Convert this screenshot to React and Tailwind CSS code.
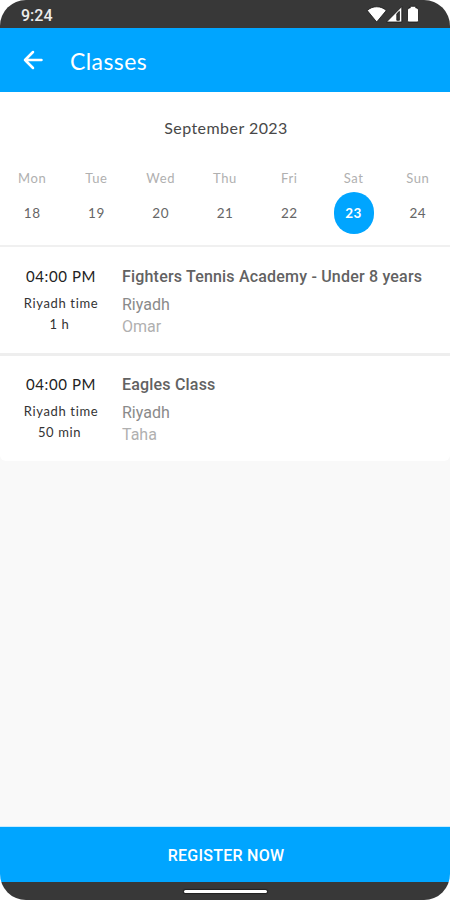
const days = [
  { name: 'Mon', date: 18 },
  { name: 'Tue', date: 19 },
  { name: 'Wed', date: 20 },
  { name: 'Thu', date: 21 },
  { name: 'Fri', date: 22 },
  { name: 'Sat', date: 23, selected: true },
  { name: 'Sun', date: 24 },
];

const classes = [
  { time: '04:00 PM', duration: '1 h', title: 'Fighters Tennis Academy - Under 8 years', city: 'Riyadh', coach: 'Omar' },
  { time: '04:00 PM', duration: '50 min', title: 'Eagles Class', city: 'Riyadh', coach: 'Taha' },
];

function StatusBar() {
  return (
    <div className="h-7 shrink-0 bg-[#383838] pl-[21px] pr-[31px] flex items-start justify-between">
      <span className="font-['Roboto',sans-serif] text-base leading-[31px] font-medium text-[#ececec]">9:24</span>
      <svg width="54" height="18" viewBox="0 0 54 18" className="mt-[5px]" fill="#fff" stroke="#151515" strokeWidth="0.8">
        <path d="M2.300 5.600C7 .5 16.500 .5 21.200 5.600L11.700 17Z" />
        <path fillRule="evenodd" d="M21.500 17L36.800 1.500V17ZM31.800 8.800V15.300H34.400V6.300Z" />
        <path d="M45.200 3V1.300H50.800V3H51.500Q53.500 3 53.500 5V15.700Q53.500 17 52.200 17H43.800Q42.500 17 42.500 15.700V5Q42.500 3 44.500 3Z" />
      </svg>
    </div>
  );
}

function Header() {
  return (
    <header className="h-[64px] shrink-0 bg-[#00a5ff] flex items-center pl-[23px] text-white">
      <svg width="20" height="20" viewBox="0 0 20 20" fill="none" stroke="currentColor" strokeWidth="2.500" strokeLinecap="round" strokeLinejoin="round">
        <path d="M18.500 10H2M10 2L2 10L10 18" />
      </svg>
      <h1 className="ml-[27px] text-[23px] leading-8 tracking-[0.4px] pt-[2px]">Classes</h1>
    </header>
  );
}

function Day({ day }) {
  return (
    <div className="flex flex-col items-center">
      <span className="text-[13px] leading-5 tracking-[0.6px] text-[#b0b0b0]">{day.name}</span>
      {day.selected ? (
        <span className="mt-1 h-[42px] w-10 pt-px rounded-full bg-[#00a5ff] flex items-center justify-center text-[13.5px] tracking-[0.5px] font-bold text-white">{day.date}</span>
      ) : (
        <span className="mt-1 h-[42px] w-10 pt-px flex items-center justify-center text-[13.5px] tracking-[0.5px] text-[#666]">{day.date}</span>
      )}
    </div>
  );
}

function ClassRow({ item }) {
  return (
    <div className="bg-white flex pb-[15px] pt-[17px] first:pt-[18px]">
      <div className="w-[122px] flex flex-col items-center text-[#333]">
        <span className="text-[15px] leading-[22px] tracking-[0.6px] text-[#222]">{item.time}</span>
        <span className="mt-[6px] text-[13px] leading-[21px] tracking-[0.65px]">Riyadh time</span>
        <span className="text-[13px] leading-[21px] tracking-[0.6px] pr-[3px]">{item.duration}</span>
      </div>
      <div className="mt-px flex flex-col font-['Roboto',sans-serif] text-base">
        <span className="leading-[22px] font-medium tracking-[0.19px] text-[#626262] whitespace-nowrap">{item.title}</span>
        <span className="mt-[6px] leading-[22px] text-[#8a8a8a]">{item.city}</span>
        <span className="leading-[22px] text-[#b0b0b0]">{item.coach}</span>
      </div>
    </div>
  );
}

export default function App() {
  return (
    <div className="bg-white">
      <div className="h-[900px] w-[450px] overflow-hidden rounded-[26px] bg-[#f9f9f9] flex flex-col font-['Lato',sans-serif]">
        <StatusBar />
        <Header />
        <section className="h-[153px] shrink-0 bg-white pt-6">
          <h2 className="pl-[2px] text-center text-base leading-6 tracking-[0.45px] text-[#484848]">September 2023</h2>
          <div className="mt-[28px] grid grid-cols-7">
            {days.map((day) => (
              <Day key={day.date} day={day} />
            ))}
          </div>
        </section>
        <main className="flex-1 border-t-2 border-[#f0f0f0]">
          <div className="divide-y-3 divide-[#eeeeee] overflow-hidden rounded-b-md">
            {classes.map((item) => (
              <ClassRow key={item.title} item={item} />
            ))}
          </div>
        </main>
        <button className="h-[56px] shrink-0 border-t border-[#c9ebff] bg-[#00a5ff] pt-[2px] pl-[2px] font-['Roboto',sans-serif] text-base font-medium tracking-[0.25px] text-white">REGISTER NOW</button>
        <div className="h-[18px] shrink-0 bg-[#383838] flex justify-center pt-[8px]">
          <div className="h-[3px] w-[83px] rounded-full bg-white shadow-[0_0_1px_1px_#222]" />
        </div>
      </div>
    </div>
  );
}
